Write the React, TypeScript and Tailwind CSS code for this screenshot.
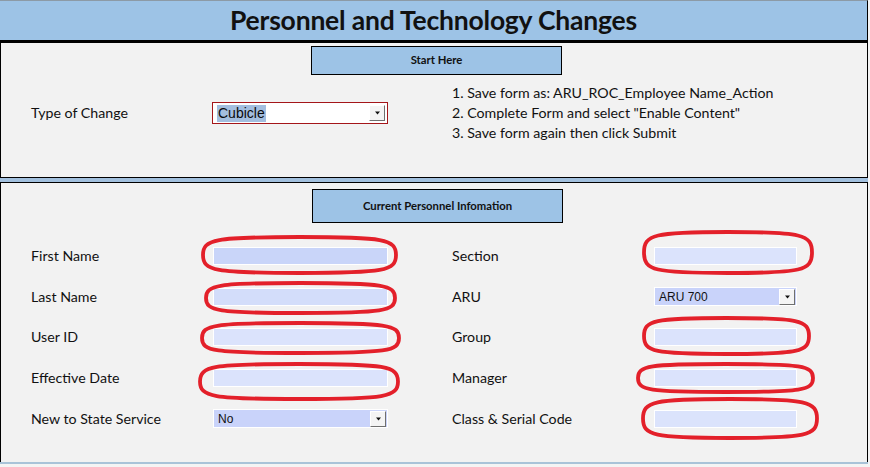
import React from "react";

const RED = "#e3202a";

function Ellipse({ w, h, cls }: { w: number; h: number; cls: string }) {
  const s = 2;
  const W = w - s * 2;
  const H = h - s * 2;
  const k = 0.88;
  const x0 = s,
    y0 = s;
  const cx = x0 + W / 2,
    cy = y0 + H / 2;
  const d = `M ${x0} ${cy} C ${x0} ${cy - (H / 2) * k} ${cx - (W / 2) * k} ${y0} ${cx} ${y0} C ${cx + (W / 2) * k} ${y0} ${x0 + W} ${cy - (H / 2) * k} ${x0 + W} ${cy} C ${x0 + W} ${cy + (H / 2) * k} ${cx + (W / 2) * k} ${y0 + H} ${cx} ${y0 + H} C ${cx - (W / 2) * k} ${y0 + H} ${x0} ${cy + (H / 2) * k} ${x0} ${cy} Z`;
  return (
    <svg width={w} height={h} className={`absolute pointer-events-none ${cls}`}>
      <path d={d} fill="none" stroke={RED} strokeWidth={3.8} />
    </svg>
  );
}

function ArrowBtn() {
  return (
    <div className="w-[16px] h-[16px] bg-[#f4f4f4] border-t border-l border-t-white border-l-white border-b border-r border-b-[#6f6f6f] border-r-[#6f6f6f] flex items-center justify-center">
      <svg width="7" height="4" viewBox="0 0 7 4">
        <path d="M1 0.5 L6 0.5 L3.5 3.5 Z" fill="#111" />
      </svg>
    </div>
  );
}

type Field = {
  kind: "input" | "select";
  value?: string;
  bg?: string;
  ell?: { w: number; h: number; cls: string };
};

type Row = {
  h: string;
  left: string;
  lf: Field;
  right: string;
  rf: Field;
};

const rows: Row[] = [
  {
    h: "h-[41px]",
    left: "First Name",
    lf: { kind: "input", bg: "bg-[#c9d5f9]", ell: { w: 197, h: 40, cls: "-left-[13px] -top-[13px]" } },
    right: "Section",
    rf: { kind: "input", bg: "bg-[#dbe3fc]", ell: { w: 172, h: 45, cls: "-left-[13px] -top-[18px]" } },
  },
  {
    h: "h-[41px]",
    left: "Last Name",
    lf: { kind: "input", bg: "bg-[#d3ddfa]", ell: { w: 193, h: 34, cls: "-left-[10px] -top-[8px]" } },
    right: "ARU",
    rf: { kind: "select", value: "ARU 700" },
  },
  {
    h: "h-[40px]",
    left: "User ID",
    lf: { kind: "input", bg: "bg-[#dbe3fc]", ell: { w: 201, h: 34, cls: "-left-[14px] -top-[8px]" } },
    right: "Group",
    rf: { kind: "input", bg: "bg-[#dbe3fc]", ell: { w: 169, h: 40, cls: "-left-[13px] -top-[13px]" } },
  },
  {
    h: "h-[41px]",
    left: "Effective Date",
    lf: { kind: "input", bg: "bg-[#dbe3fc]", ell: { w: 202, h: 39, cls: "-left-[16px] -top-[8px]" } },
    right: "Manager",
    rf: { kind: "input", bg: "bg-[#dbe3fc]", ell: { w: 179, h: 32, cls: "-left-[19px] -top-[8px]" } },
  },
  {
    h: "h-[41px]",
    left: "New to State Service",
    lf: { kind: "select", value: "No" },
    right: "Class & Serial Code",
    rf: { kind: "input", bg: "bg-[#dbe3fc]", ell: { w: 178, h: 43, cls: "-left-[14px] -top-[14px]" } },
  },
];

function FieldBox({ f, w }: { f: Field; w: string }) {
  if (f.kind === "select") {
    return (
      <div className={`relative ${w} h-[19px] bg-[#c9d3fa] border border-white flex items-center justify-between pl-[4px] pr-[1px]`}>
        <span className="text-[12px] text-[#111] leading-none" style={{ fontFamily: '"Liberation Sans", Arial, sans-serif' }}>
          {f.value}
        </span>
        <ArrowBtn />
      </div>
    );
  }
  return (
    <div className={`relative ${w} h-[18px] ${f.bg} border border-white`}>
      {f.ell && <Ellipse w={f.ell.w} h={f.ell.h} cls={f.ell.cls} />}
    </div>
  );
}

export default function App() {
  const font = { fontFamily: 'Lato, "Open Sans", sans-serif' };
  return (
    <div className="w-[870px] h-[467px] bg-[#f4f4f4] overflow-hidden text-[#111]" style={font}>
      <div className="w-[868px]">
        {/* Header */}
        <div className="h-[43px] bg-[#9dc3e6] border-t border-t-[#8c9aa6] border-r border-r-black border-b-[3px] border-b-black flex items-center justify-center">
          <h1 className="text-[26.5px] font-bold leading-none tracking-[-0.2px] -mt-[1px]">Personnel and Technology Changes</h1>
        </div>

        {/* Section 1 */}
        <div className="h-[134px] pt-[3px] bg-[#f2f2f2] border-l border-r border-black">
          <div className="ml-[310px] w-[251px] h-[29px] bg-[#9dc3e6] border border-black flex items-center justify-center">
            <span className="text-[11.3px] font-bold">Start Here</span>
          </div>
          <div className="flex items-start mt-[8px]">
            <div className="flex items-center pl-[30px] mt-[19px]">
              <span className="w-[181px] text-[14.2px]">Type of Change</span>
              <div className="w-[176px] h-[22px] bg-white border border-[#a4161a] flex items-center justify-between pl-[4px] pr-[2px]">
                <span
                  className="bg-[#a3bedf] text-[14px] leading-[17px] px-[1px] text-[#0a0a0a]"
                  style={{ fontFamily: '"Liberation Sans", Arial, sans-serif' }}
                >
                  Cubicle
                </span>
                <ArrowBtn />
              </div>
            </div>
            <div className="ml-[64px] text-[14.2px] leading-[20px]">
              <div>1. Save form as: ARU_ROC_Employee Name_Action</div>
              <div>2. Complete Form and select "Enable Content"</div>
              <div>3. Save form again then click Submit</div>
            </div>
          </div>
        </div>

        {/* Separator */}
        <div className="h-[6px] bg-[#a2c0de] border-y border-black" />

        {/* Section 2 */}
        <div className="h-[279px] pt-[6px] bg-[#f2f2f2] border-l border-r border-black">
          <div className="ml-[311px] w-[251px] h-[34px] bg-[#9dc3e6] border border-black flex items-center justify-center">
            <span className="text-[11.3px] font-bold">Current Personnel Infomation</span>
          </div>
          <div className="mt-[12px] flex flex-col">
            {rows.map((r) => (
              <div key={r.left} className={`flex items-center ${r.h} pl-[30px]`}>
                <span className="w-[182px] text-[14.2px]">{r.left}</span>
                <FieldBox f={r.lf} w="w-[175px]" />
                <span className="ml-[64px] w-[202px] text-[14.2px]">{r.right}</span>
                <FieldBox f={r.rf} w="w-[143px]" />
              </div>
            ))}
          </div>
        </div>
        <div className="h-[2px] bg-[#a9c3d8]" />
      </div>
    </div>
  );
}
